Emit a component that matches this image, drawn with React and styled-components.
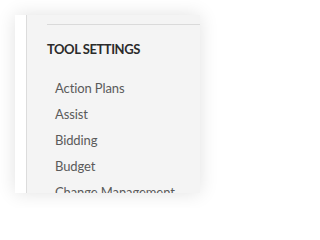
import React from 'react';
import styled, { createGlobalStyle } from 'styled-components';

const GlobalStyle = createGlobalStyle`
    *,
    ::after,
    ::before {
        margin: 0;
        padding: 0;
        box-sizing: border-box;
    }
    body {
        background: #fff;
        font-family: 'Lato', 'Noto Sans', sans-serif;
    }
`;

const Page = styled.div`
    padding: 15px;
`;

const Card = styled.div`
    width: 185px;
    height: 178px;
    display: flex;
    overflow: hidden;
    box-shadow: 0 0 18px rgba(0, 0, 0, 0.12);
`;

const Rail = styled.div`
    width: 12px;
    flex-shrink: 0;
    background: #fff;
    border-right: 1px solid #dcdcdc;
`;

const Panel = styled.div`
    flex: 1;
    background: #f4f4f4;
    padding-top: 9px;
    padding-left: 20px;
`;

const Divider = styled.hr`
    border: none;
    border-top: 1px solid #dadada;
    margin-bottom: 16px;
`;

const Heading = styled.h3`
    font-size: 13px;
    line-height: 16px;
    font-weight: 700;
    color: #2b2b2b;
    letter-spacing: -0.45px;
    text-transform: uppercase;
    margin-bottom: 18px;
`;

const List = styled.ul`
    list-style: none;
    padding-left: 8px;
`;

const Item = styled.li`
    font-size: 13px;
    line-height: 26px;
    color: #5a5a5a;
    letter-spacing: -0.1px;
    white-space: nowrap;
`;

const items = ['Action Plans', 'Assist', 'Bidding', 'Budget', 'Change Management'];

const App = () => (
    <Page>
        <GlobalStyle />
        <Card>
            <Rail />
            <Panel>
                <Divider />
                <Heading>Tool Settings</Heading>
                <List>
                    {items.map((name) => (
                        <Item key={name}>{name}</Item>
                    ))}
                </List>
            </Panel>
        </Card>
    </Page>
);

export default App;
